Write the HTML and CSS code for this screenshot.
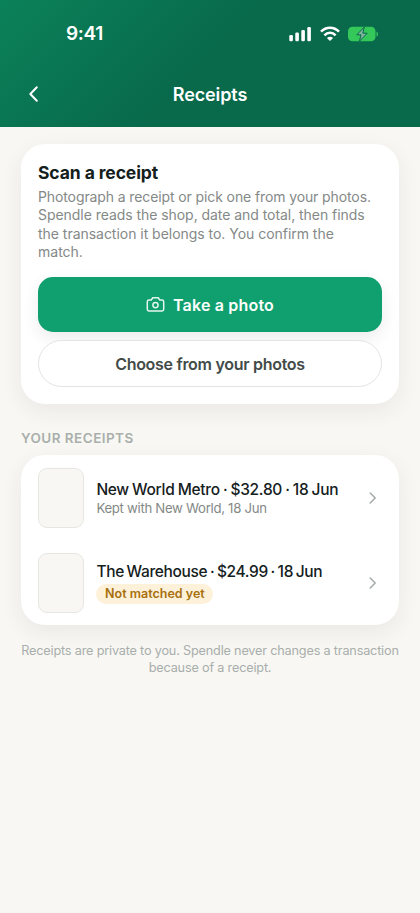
FILE: index.html
```html
<!DOCTYPE html>
<html lang="en">
<head>
<meta charset="utf-8">
<meta name="viewport" content="width=device-width, initial-scale=1">
<title>Receipts</title>
<link rel="stylesheet" href="styles.css">
</head>
<body>
<header class="header">
  <div class="status">
    <span class="time">9:41</span>
    <div class="status-icons">
      <svg class="signal" width="23" height="16" viewBox="0 0 23 16" fill="#fff"><rect x="0.3" y="9" width="3.6" height="6.2" rx="1.2"/><rect x="6.3" y="6.6" width="3.6" height="8.6" rx="1.2"/><rect x="12.3" y="3.9" width="3.6" height="11.3" rx="1.2"/><rect x="18.3" y="1" width="3.6" height="14.2" rx="1.2"/></svg>
      <svg class="wifi" width="20" height="16" viewBox="0 0 20 16" fill="none" stroke="#fff" stroke-width="2.5"><path d="M1 5.7C6 .3 14 .3 19 5.7"/><path d="M4.4 9.3C7.6 6 12.4 6 15.6 9.3"/><path d="M10 15 6.9 11.9C8.6 10.2 11.4 10.2 13.1 11.9Z" fill="#fff" stroke="none"/></svg>
      <svg class="battery" width="31" height="16" viewBox="0 0 31 16"><rect x="0" y="0.8" width="27.5" height="14.5" rx="4.4" fill="#34c759"/><path d="M28.5 5.4C30.6 6.2 30.6 9.8 28.5 10.6Z" fill="#34c759"/><path d="M16.3 1 8.8 8.8H13L11.5 15.2 19.2 7.2H14.8Z" fill="#82b5a0" stroke="#08694b" stroke-width="1"/></svg>
    </div>
  </div>
  <nav class="nav">
    <svg class="back" width="24" height="24" viewBox="0 0 24 24" fill="none" stroke="#fff" stroke-width="2" stroke-linecap="round" stroke-linejoin="round"><path d="M15.8 17.7 9.3 11 15.8 4.3"/></svg>
    <h1 class="title">Receipts</h1>
  </nav>
</header>
<main class="main">
  <section class="card scan">
    <h2 class="scan-title">Scan a receipt</h2>
    <p class="scan-text"><span class="line-a">Photograph a receipt or pick one from your photos.</span><br><span class="line-b">Spendle reads the shop, date and total, then finds</span><br><span class="line-c">the transaction it belongs to. You confirm the</span><br>match.</p>
    <button class="btn primary">
      <svg width="19" height="18" viewBox="0 0 19 18" fill="none" stroke="#e6f6ef" stroke-width="1.5" stroke-linejoin="round"><path d="M3 4H5.2L6.8 1.8H12.2L13.8 4H16C17 4 17.7 4.7 17.7 5.7V13.3C17.7 14.3 17 15 16 15H3C2 15 1.3 14.3 1.3 13.3V5.7C1.3 4.7 2 4 3 4Z"/><circle cx="9.5" cy="9.1" r="2.6"/></svg>
      <span>Take a photo</span>
    </button>
    <button class="btn secondary"><span>Choose from your photos</span></button>
  </section>
  <h2 class="section-label">YOUR RECEIPTS</h2>
  <section class="card list">
    <div class="row">
      <div class="thumb"></div>
      <div class="info">
        <div class="name">New World Metro · $32.80 · 18 Jun</div>
        <div class="sub">Kept with New World, 18 Jun</div>
      </div>
      <svg class="chev" width="18" height="18" viewBox="0 0 18 18" fill="none" stroke="#a3a9a6" stroke-width="1.5" stroke-linecap="round" stroke-linejoin="round"><path d="M6.2 4 11.2 9 6.2 14"/></svg>
    </div>
    <div class="row">
      <div class="thumb"></div>
      <div class="info">
        <div class="name tight">The Warehouse · $24.99 · 18 Jun</div>
        <div class="pill">Not matched yet</div>
      </div>
      <svg class="chev" width="18" height="18" viewBox="0 0 18 18" fill="none" stroke="#a3a9a6" stroke-width="1.5" stroke-linecap="round" stroke-linejoin="round"><path d="M6.2 4 11.2 9 6.2 14"/></svg>
    </div>
  </section>
  <p class="note">Receipts are private to you. Spendle never changes a transaction<br>because of a receipt.</p>
</main>
</body>
</html>
```
FILE: styles.css
```css
* { box-sizing: border-box; }
body {
  margin: 0;
  min-height: 913px;
  background: #f8f7f3;
  font-family: Inter, "Liberation Sans", sans-serif;
  color: #14201c;
}
h1, h2, p { margin: 0; }
.header {
  height: 127px;
  background: linear-gradient(135deg, #0b8159 0%, #08694b 50%, #08694b 100%);
}
.status {
  height: 68px;
  padding: 0 41px 0 66px;
  display: flex;
  align-items: center;
  justify-content: space-between;
}
.time { color: #fff; font-size: 19px; font-weight: 600; line-height: 24px; letter-spacing: -0.3px; }
.status-icons { display: flex; align-items: center; gap: 8px; }
.nav {
  height: 53px;
  padding: 0 21px;
  display: grid;
  grid-template-columns: 24px 1fr 24px;
  align-items: center;
}
.title { color: #fff; font-size: 18px; font-weight: 600; text-align: center; line-height: 24px; letter-spacing: -0.1px; }
.main { padding: 17px 21px 0; }
.card {
  background: #fff;
  border-radius: 24px;
  box-shadow: 0 7px 22px rgba(40, 45, 40, 0.07);
}
.scan { height: 260px; padding: 17px; }
.scan-title { font-size: 17.5px; font-weight: 700; line-height: 24px; letter-spacing: -0.1px; }
.scan-text { margin-top: 3px; font-size: 14px; font-weight: 400; line-height: 18.3px; color: #848987; white-space: nowrap; }
.line-a { letter-spacing: -0.11px; }
.line-b { letter-spacing: -0.05px; }
.line-c { letter-spacing: -0.03px; }
.btn {
  width: 100%;
  display: flex;
  align-items: center;
  justify-content: center;
  padding: 0;
  font: 600 16px/22px Inter, "Liberation Sans", sans-serif;
}
.primary {
  height: 54.5px;
  margin-top: 16.2px;
  padding-top: 1px;
  gap: 8px;
  border: 0;
  border-radius: 15px;
  background: #109f6e;
  color: #fff;
  letter-spacing: 0.18px;
  box-shadow: 0 6px 16px rgba(40, 45, 40, 0.09);
}
.secondary {
  height: 47px;
  margin-top: 8.5px;
  border: 1px solid #e3e4e2;
  border-radius: 24px;
  background: #fff;
  color: #434b48;
  letter-spacing: -0.29px;
}
.section-label { margin-top: 26px; font-size: 13.5px; line-height: 16px; font-weight: 600; color: #a9afab; letter-spacing: 0.45px; }
.list { margin-top: 9px; height: 170px; padding: 0 17px; }
.row { height: 85px; display: flex; align-items: center; }
.thumb { width: 46px; height: 60px; border: 1px solid #e6e6e2; border-radius: 9px; background: #f8f7f4; }
.info { flex: 1; margin-left: 12.4px; white-space: nowrap; }
.name { padding-top: 1px; font-size: 15.5px; font-weight: 500; line-height: 20px; letter-spacing: -0.3px; word-spacing: -0.65px; }
.tight { padding-top: 0; letter-spacing: -0.35px; word-spacing: -1.1px; }
.sub { font-size: 13.2px; font-weight: 400; line-height: 17px; color: #848987; letter-spacing: -0.3px; }
.pill {
  width: 117px;
  height: 20px;
  margin-top: 2px;
  border-radius: 10px;
  background: #fdf1d9;
  color: #a86f0c;
  font-size: 12.5px;
  font-weight: 600;
  line-height: 20px;
  text-align: center;
}
.note { margin-top: 17px; text-align: center; font-size: 12.7px; font-weight: 400; line-height: 17px; color: #a8aeab; letter-spacing: -0.19px; white-space: nowrap; }
```
